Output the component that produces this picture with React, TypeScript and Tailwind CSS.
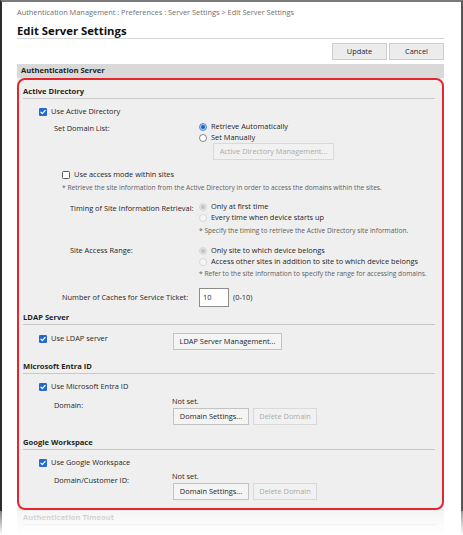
import type { ReactNode } from "react";

const sans = "font-['Open_Sans','Noto_Sans',sans-serif]";

function Check({ on }: { on: boolean }) {
  if (!on) {
    return <span className="block h-[8px] w-[8px] shrink-0 rounded-[1.5px] border border-[#5a5a5a] bg-white" />;
  }
  return (
    <svg width="8" height="8" viewBox="0 0 8 8" className="shrink-0">
      <rect width="8" height="8" rx="1.3" fill="#2468d2" />
      <path d="M1.9 4.2 3.3 5.6 6.1 2.5" fill="none" stroke="#fff" strokeWidth="1.2" strokeLinecap="round" strokeLinejoin="round" />
    </svg>
  );
}

function Radio({ on, disabled }: { on?: boolean; disabled?: boolean }) {
  let ring = "#6b6b6b";
  let fill = "#fff";
  let dot = "#1f5fc7";
  if (disabled) {
    ring = "#d2d2d2";
    fill = on ? "#e4e4e4" : "#f6f6f6";
    dot = "#c2c2c2";
  } else if (on) {
    ring = "#3b78d8";
    fill = "#b4cdf2";
  }
  return (
    <svg width="8" height="8" viewBox="0 0 8 8" className="shrink-0">
      <circle cx="4" cy="4" r="3.5" fill={fill} stroke={ring} strokeWidth="0.8" />
      {on && <circle cx="4" cy="4" r="2" fill={dot} />}
    </svg>
  );
}

function CheckRow({ on, children, className = "" }: { on: boolean; children: ReactNode; className?: string }) {
  return (
    <div className={`flex h-[12px] items-center gap-[4px] ${className}`}>
      <Check on={on} />
      <span>{children}</span>
    </div>
  );
}

function RadioRow({ on, disabled, children }: { on?: boolean; disabled?: boolean; children: ReactNode }) {
  return (
    <div className="flex h-[11px] items-center gap-[4px]">
      <Radio on={on} disabled={disabled} />
      <span>{children}</span>
    </div>
  );
}

function Btn({ disabled, className = "", children }: { disabled?: boolean; className?: string; children: ReactNode }) {
  return (
    <div
      className={`flex h-[17px] items-center justify-center border ${
        disabled ? "border-[#d9d9d9] bg-[#f1f1f1] text-[#ababab]" : "border-[#c3c3c3] bg-[#f4f4f4] text-[#1f1f1f]"
      } ${className}`}
    >
      {children}
    </div>
  );
}

function SubHead({ className = "", children }: { className?: string; children: ReactNode }) {
  return (
    <div className={`ml-[4px] mr-[7px] flex h-[13px] items-center border-b border-[#c8c8c8] text-[7.6px] font-bold ${className}`}>
      {children}
    </div>
  );
}

function Note({ className = "", children }: { className?: string; children: ReactNode }) {
  return <div className={`flex h-[10px] items-center text-[6.65px] text-[#5e5e5e] ${className}`}>{children}</div>;
}

function DomainBlock({ label }: { label: string }) {
  return (
    <div className="ml-[35px] flex">
      <div className="w-[118px] pt-[4px]">
        <div className="flex h-[10px] items-center">{label}</div>
      </div>
      <div>
        <div className="flex h-[10px] items-center">Not set.</div>
        <div className="ml-[1px] mt-[1px] flex gap-[4px]">
          <Btn className="w-[76px]">Domain Settings...</Btn>
          <Btn disabled className="w-[64px]">Delete Domain</Btn>
        </div>
      </div>
    </div>
  );
}

export default function App() {
  return (
    <div className={`relative h-[535px] w-[463px] overflow-hidden bg-white leading-none text-[#1f1f1f] ${sans}`}>
      <div className="h-full border-l-2 border-r-2 border-t-2 border-l-[#2b2b2b] border-r-[#575757] border-t-[#7a7a7a] pl-[15px] pr-[17px] pt-[6px] text-[7.4px]">
        <div className="flex h-[10px] items-center whitespace-nowrap text-[#707070]">
          Authentication Management : Preferences : Server Settings &gt; Edit Server Settings
        </div>
        <div className="mt-[6px] flex h-[15px] items-center border-b border-[#d6d6d6] text-[11.3px] font-bold text-[#111]">
          Edit Server Settings
        </div>
        <div className="mt-[4px] flex justify-end gap-[2px]">
          <div className="flex h-[17px] w-[55px] items-center justify-center border border-[#cdcdcd] bg-[#ececec]">Update</div>
          <div className="flex h-[17px] w-[55px] items-center justify-center border border-[#cdcdcd] bg-[#ececec]">Cancel</div>
        </div>
        <div className="mt-[4px] flex h-[14px] items-center bg-[#d9d9d9] pl-[4px] text-[7.6px] font-bold">
          Authentication Server
        </div>

        <div className="bg-[#efefef]">
          <div className="rounded-[8px] border-2 border-[#e5262f] pb-[8px]">
            <SubHead className="mt-[6px]">Active Directory</SubHead>
            <CheckRow on className="ml-[20px] mt-[7px]">Use Active Directory</CheckRow>

            <div className="ml-[35px] mt-[3px] flex">
              <div className="w-[145px] pt-[2px]">
                <div className="flex h-[11px] items-center">Set Domain List:</div>
              </div>
              <div>
                <RadioRow on>Retrieve Automatically</RadioRow>
                <RadioRow>Set Manually</RadioRow>
                <Btn disabled className="ml-[14px] w-[121px]">Active Directory Management...</Btn>
              </div>
            </div>

            <CheckRow on={false} className="ml-[43px] mt-[9px]">Use access mode within sites</CheckRow>
            <Note className="ml-[43px] mt-[2px]">
              * Retrieve the site information from the Active Directory in order to access the domains within the sites.
            </Note>

            <div className="ml-[51px] mt-[8px] flex">
              <div className="w-[129px] pt-[2px]">
                <div className="flex h-[11px] items-center">Timing of Site Information Retrieval:</div>
              </div>
              <div>
                <RadioRow on disabled>Only at first time</RadioRow>
                <RadioRow disabled>Every time when device starts up</RadioRow>
                <Note className="mt-[3px]">* Specify the timing to retrieve the Active Directory site information.</Note>
              </div>
            </div>

            <div className="ml-[51px] mt-[9px] flex">
              <div className="w-[129px]">
                <div className="flex h-[11px] items-center">Site Access Range:</div>
              </div>
              <div>
                <RadioRow on disabled>Only site to which device belongs</RadioRow>
                <RadioRow disabled>Access other sites in addition to site to which device belongs</RadioRow>
                <Note className="mt-[2px]">* Refer to the site information to specify the range for accessing domains.</Note>
              </div>
            </div>

            <div className="ml-[43px] mt-[9px] flex h-[19px] items-center">
              <div className="w-[137px]">Number of Caches for Service Ticket:</div>
              <div className="flex h-[19px] w-[30px] items-center border border-[#8c8c8c] bg-white pl-[3px]">10</div>
              <div className="ml-[4px]">(0-10)</div>
            </div>

            <SubHead className="mt-[5px]">LDAP Server</SubHead>
            <div className="ml-[20px] mt-[8px] flex items-start">
              <CheckRow on className="w-[134px]">Use LDAP server</CheckRow>
              <Btn className="w-[109px]">LDAP Server Management...</Btn>
            </div>

            <SubHead className="mt-[11px]">Microsoft Entra ID</SubHead>
            <CheckRow on className="ml-[20px] mt-[7px]">Use Microsoft Entra ID</CheckRow>
            <div className="mt-[4px]">
              <DomainBlock label="Domain:" />
            </div>

            <SubHead className="mt-[12px]">Google Workspace</SubHead>
            <CheckRow on className="ml-[20px] mt-[7px]">Use Google Workspace</CheckRow>
            <div className="mt-[3px]">
              <DomainBlock label="Domain/Customer ID:" />
            </div>
          </div>

          <SubHead className="ml-[6px] mr-[9px] mt-[2px] text-[#9a9a9a]">Authentication Timeout</SubHead>
          <div className="h-[20px]" />
        </div>
      </div>

      {/* bottom edge fades out */}
      <div className="pointer-events-none absolute bottom-0 left-0 right-0 h-[24px] bg-linear-to-b from-white/40 to-white" />
    </div>
  );
}
